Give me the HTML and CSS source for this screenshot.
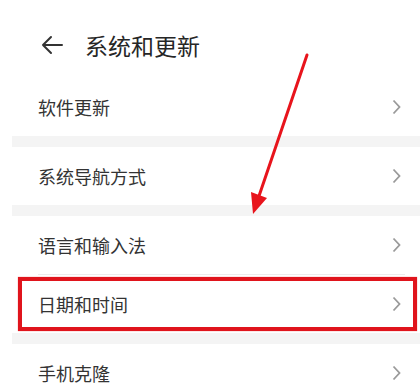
FILE: index.html
```html
<!DOCTYPE html>
<html lang="zh">
<head>
<meta charset="utf-8">
<link rel="stylesheet" href="styles.css">
</head>
<body>
<div class="page">
  <header class="header">
    <svg class="back" width="24" height="20" viewBox="0 0 24 20">
      <path d="M22 10H3M11 2L3 10l8 8" fill="none" stroke="#333" stroke-width="2" stroke-linecap="round" stroke-linejoin="round"/>
    </svg>
    <h1 class="title">系统和更新</h1>
  </header>
  <div class="list">
    <div class="group">
      <div class="row"><span class="label">软件更新</span><svg class="chev" width="9" height="16" viewBox="0 0 9 16"><path d="M1.5 1.5L7.5 8l-6 6.5" fill="none" stroke="#9a9a9a" stroke-width="1.8"/></svg></div>
    </div>
    <div class="band"></div>
    <div class="group">
      <div class="row"><span class="label">系统导航方式</span><svg class="chev" width="9" height="16" viewBox="0 0 9 16"><path d="M1.5 1.5L7.5 8l-6 6.5" fill="none" stroke="#9a9a9a" stroke-width="1.8"/></svg></div>
    </div>
    <div class="band"></div>
    <div class="group">
      <div class="row"><span class="label">语言和输入法</span><svg class="chev" width="9" height="16" viewBox="0 0 9 16"><path d="M1.5 1.5L7.5 8l-6 6.5" fill="none" stroke="#9a9a9a" stroke-width="1.8"/></svg></div>
      <div class="divider"></div>
      <div class="row"><span class="label">日期和时间</span><svg class="chev" width="9" height="16" viewBox="0 0 9 16"><path d="M1.5 1.5L7.5 8l-6 6.5" fill="none" stroke="#9a9a9a" stroke-width="1.8"/></svg></div>
    </div>
    <div class="band"></div>
    <div class="group">
      <div class="row"><span class="label">手机克隆</span><svg class="chev" width="9" height="16" viewBox="0 0 9 16"><path d="M1.5 1.5L7.5 8l-6 6.5" fill="none" stroke="#9a9a9a" stroke-width="1.8"/></svg></div>
    </div>
  </div>
  <div class="highlight"></div>
  <svg class="pointer" width="420" height="389" viewBox="0 0 420 389">
    <line x1="307" y1="55" x2="259" y2="196" stroke="#e8141c" stroke-width="3" stroke-linecap="round"/>
    <polygon points="253,214 251,192 267,198" fill="#e8141c"/>
  </svg>
</div>
</body>
</html>
```

FILE: styles.css
```css
html, body {
  margin: 0;
  padding: 0;
  background: #ffffff;
}
body {
  width: 420px;
  height: 389px;
  overflow: hidden;
  font-family: "Noto Sans CJK SC", "Noto Sans", sans-serif;
  color: #333333;
}
.page {
  position: relative;
  width: 420px;
  height: 389px;
  overflow: hidden;
}
.header {
  height: 66px;
  padding-top: 12px;
  display: flex;
  align-items: center;
  padding-left: 40px;
}
.back {
  display: block;
  margin-right: 21px;
}
.title {
  margin: 0;
  font-size: 23px;
  font-weight: 400;
  color: #262626;
  line-height: 1;
}
.list {
  margin-left: 12px;
}
.row {
  height: 58px;
  display: flex;
  align-items: center;
  justify-content: space-between;
  padding-left: 26px;
  padding-right: 19px;
}
.group:first-child .row {
  height: 58px;
}
.label {
  font-size: 18px;
  line-height: 1;
  color: #333333;
}
.chev {
  display: block;
}
.band {
  height: 11px;
  background: #f4f4f4;
}
.divider {
  height: 1px;
  background: #ececec;
  margin-left: 26px;
  margin-right: 15px;
}
.highlight {
  position: absolute;
  left: 18px;
  top: 277px;
  width: 391px;
  height: 46px;
  border: 4px solid #e0141c;
  box-shadow: 0 0 1px rgba(224, 20, 28, 0.6);
}
.pointer {
  position: absolute;
  left: 0;
  top: 0;
  pointer-events: none;
}
```
